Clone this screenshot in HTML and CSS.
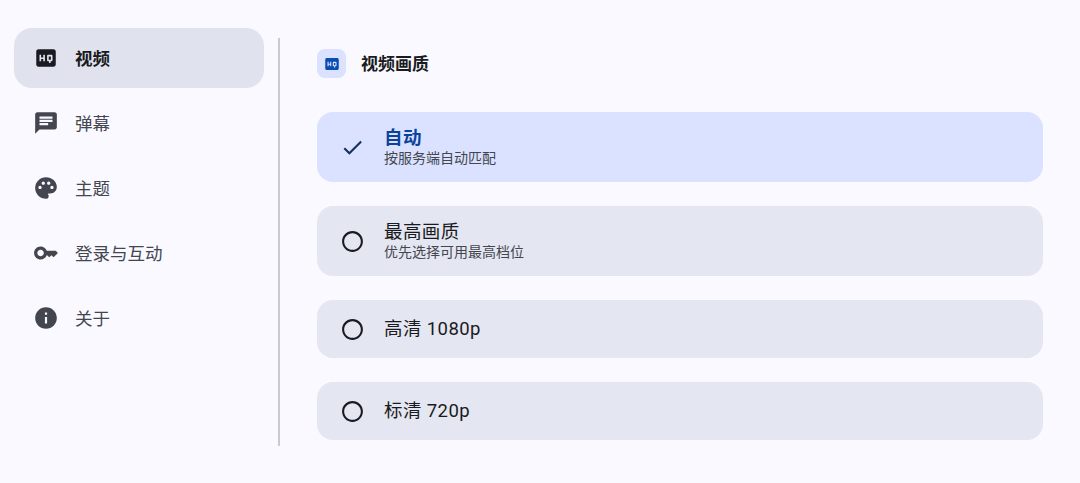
FILE: index.html
```html
<!DOCTYPE html>
<html lang="zh-CN">
<head>
<meta charset="utf-8">
<title>视频画质</title>
<link rel="stylesheet" href="styles.css">
</head>
<body>
<div class="page">
  <nav class="nav">
    <div class="nav-item active">
      <svg class="nav-icon" viewBox="0 0 24 24"><path d="M19 4H5c-1.11 0-2 .9-2 2v12c0 1.1.89 2 2 2h14c1.1 0 2-.9 2-2V6c0-1.1-.9-2-2-2zm-8 11H9.5v-2h-2v2H6V9h1.5v2.5h2V9H11v6zm7-1c0 .55-.45 1-1 1h-.75v1.5h-1.5V15H14c-.55 0-1-.45-1-1v-4c0-.55.45-1 1-1h3c.55 0 1 .45 1 1v4zm-3.5-.5h2v-3h-2v3z"/></svg>
      <span class="nav-label">视频</span>
    </div>
    <div class="nav-item">
      <svg class="nav-icon" viewBox="0 0 24 24"><path d="M20 2H4c-1.1 0-1.99.9-1.99 2L2 22l4-4h14c1.1 0 2-.9 2-2V4c0-1.1-.9-2-2-2zM6 9h12v2H6V9zm8 5H6v-2h8v2zm4-6H6V6h12v2z"/></svg>
      <span class="nav-label">弹幕</span>
    </div>
    <div class="nav-item">
      <svg class="nav-icon" viewBox="0 0 24 24"><path d="M12 2C6.49 2 2 6.49 2 12s4.49 10 10 10c1.38 0 2.5-1.12 2.5-2.5 0-.61-.23-1.2-.64-1.67-.08-.1-.13-.21-.13-.33 0-.28.22-.5.5-.5H16c3.31 0 6-2.69 6-6 0-4.96-4.49-9-10-9zm5.5 11c-.83 0-1.5-.67-1.5-1.5s.67-1.5 1.5-1.5 1.5.67 1.5 1.5-.67 1.5-1.5 1.5zm-3-4c-.83 0-1.5-.67-1.5-1.5S13.67 6 14.5 6s1.5.67 1.5 1.5S15.33 9 14.5 9zM5 11.5c0-.83.67-1.5 1.5-1.5s1.5.67 1.5 1.5S7.33 13 6.5 13 5 12.33 5 11.5zm6-4c0 .83-.67 1.5-1.5 1.5S8 8.33 8 7.5 8.67 6 9.5 6s1.5.67 1.5 1.5z"/></svg>
      <span class="nav-label">主题</span>
    </div>
    <div class="nav-item">
      <svg class="nav-icon" viewBox="0 0 24 24"><path d="M21 10h-8.35C11.83 7.67 9.61 6 7 6c-3.31 0-6 2.69-6 6s2.69 6 6 6c2.61 0 4.83-1.67 5.65-4H13l2 2 2-2 2 2 4-4.04L21 10zM7 15c-1.65 0-3-1.35-3-3s1.35-3 3-3 3 1.35 3 3-1.35 3-3 3z"/></svg>
      <span class="nav-label">登录与互动</span>
    </div>
    <div class="nav-item">
      <svg class="nav-icon" viewBox="0 0 24 24"><path d="M12 2C6.48 2 2 6.48 2 12s4.48 10 10 10 10-4.48 10-10S17.52 2 12 2zm1 15h-2v-6h2v6zm0-8h-2V7h2v2z"/></svg>
      <span class="nav-label">关于</span>
    </div>
  </nav>
  <div class="divider"></div>
  <main class="content">
    <header class="header">
      <div class="header-badge">
        <svg class="header-icon" viewBox="0 0 24 24"><path d="M19 4H5c-1.11 0-2 .9-2 2v12c0 1.1.89 2 2 2h14c1.1 0 2-.9 2-2V6c0-1.1-.9-2-2-2zm-8 11H9.5v-2h-2v2H6V9h1.5v2.5h2V9H11v6zm7-1c0 .55-.45 1-1 1h-.75v1.5h-1.5V15H14c-.55 0-1-.45-1-1v-4c0-.55.45-1 1-1h3c.55 0 1 .45 1 1v4zm-3.5-.5h2v-3h-2v3z"/></svg>
      </div>
      <h1 class="title">视频画质</h1>
    </header>
    <div class="options">
      <div class="option tall selected">
        <svg class="option-icon check" viewBox="0 0 24 24"><path d="M9 16.17L4.83 12l-1.42 1.41L9 19 21 7l-1.41-1.41z"/></svg>
        <div class="option-text">
          <div class="option-title">自动</div>
          <div class="option-sub">按服务端自动匹配</div>
        </div>
      </div>
      <div class="option tall">
        <svg class="option-icon" viewBox="0 0 24 24"><path d="M12 2C6.48 2 2 6.48 2 12s4.48 10 10 10 10-4.48 10-10S17.52 2 12 2zm0 18c-4.42 0-8-3.58-8-8s3.58-8 8-8 8 3.58 8 8-3.58 8-8 8z"/></svg>
        <div class="option-text">
          <div class="option-title">最高画质</div>
          <div class="option-sub">优先选择可用最高档位</div>
        </div>
      </div>
      <div class="option">
        <svg class="option-icon" viewBox="0 0 24 24"><path d="M12 2C6.48 2 2 6.48 2 12s4.48 10 10 10 10-4.48 10-10S17.52 2 12 2zm0 18c-4.42 0-8-3.58-8-8s3.58-8 8-8 8 3.58 8 8-3.58 8-8 8z"/></svg>
        <div class="option-text">
          <div class="option-title">高清 1080p</div>
        </div>
      </div>
      <div class="option">
        <svg class="option-icon" viewBox="0 0 24 24"><path d="M12 2C6.48 2 2 6.48 2 12s4.48 10 10 10 10-4.48 10-10S17.52 2 12 2zm0 18c-4.42 0-8-3.58-8-8s3.58-8 8-8 8 3.58 8 8-3.58 8-8 8z"/></svg>
        <div class="option-text">
          <div class="option-title">标清 720p</div>
        </div>
      </div>
    </div>
  </main>
</div>
</body>
</html>
```

FILE: styles.css
```css
* { box-sizing: border-box; }
html, body { margin: 0; height: 100%; }
body {
  background: #f9f9ff;
  color: #1a1b20;
  font-family: Roboto, "Noto Sans CJK SC", sans-serif;
  overflow: hidden;
}
.page {
  display: flex;
  width: 1080px;
  height: 483px;
}
.nav {
  width: 250px;
  margin: 28px 0 0 14px;
  display: flex;
  flex-direction: column;
  gap: 5px;
}
.nav-item {
  height: 60px;
  padding-left: 19px;
  display: flex;
  align-items: center;
  gap: 16px;
  border-radius: 18px;
  font-size: 17.5px;
  color: #44464f;
}
.nav-item.active {
  background: #e0e3ee;
  color: #1a1b20;
  font-weight: 700;
}
.nav-label { margin-bottom: 2px; }
.nav-icon {
  width: 26px;
  height: 26px;
  flex: none;
  fill: #44464f;
}
.active .nav-icon { fill: #1a1b20; }
.divider {
  width: 2px;
  height: 408px;
  margin: 38px 0 0 14px;
  background: #c9cad4;
}
.content {
  width: 726px;
  margin-left: 37px;
  padding-top: 49px;
}
.header {
  display: flex;
  align-items: center;
  gap: 15px;
  margin-bottom: 34px;
}
.header-badge {
  width: 29px;
  height: 29px;
  border-radius: 8px;
  background: #dae2ff;
  display: flex;
  align-items: center;
  justify-content: center;
}
.header-icon {
  width: 18px;
  height: 18px;
  fill: #0b4cb0;
}
.title {
  margin: 0 0 2px;
  font-size: 17px;
  font-weight: 700;
  color: #1a1b20;
}
.options {
  display: flex;
  flex-direction: column;
  gap: 24px;
}
.option {
  height: 58px;
  padding-left: 23px;
  display: flex;
  align-items: center;
  gap: 19px;
  border-radius: 16px;
  background: #e4e6f1;
}
.option.tall { height: 70px; }
.option.selected { background: #dae2ff; }
.option-icon {
  width: 25px;
  height: 25px;
  flex: none;
  fill: #1a1b20;
}
.option-icon.check { fill: #16315f; }
.option-text {
  display: flex;
  flex-direction: column;
}
.option-title {
  font-size: 18.5px;
  letter-spacing: 0.4px;
  line-height: 21px;
  color: #1a1b20;
}
.selected .option-title {
  font-weight: 700;
  color: #0b429c;
}
.option-sub {
  margin-top: 1px;
  font-size: 14px;
  line-height: 16px;
  color: #44464f;
}
```
